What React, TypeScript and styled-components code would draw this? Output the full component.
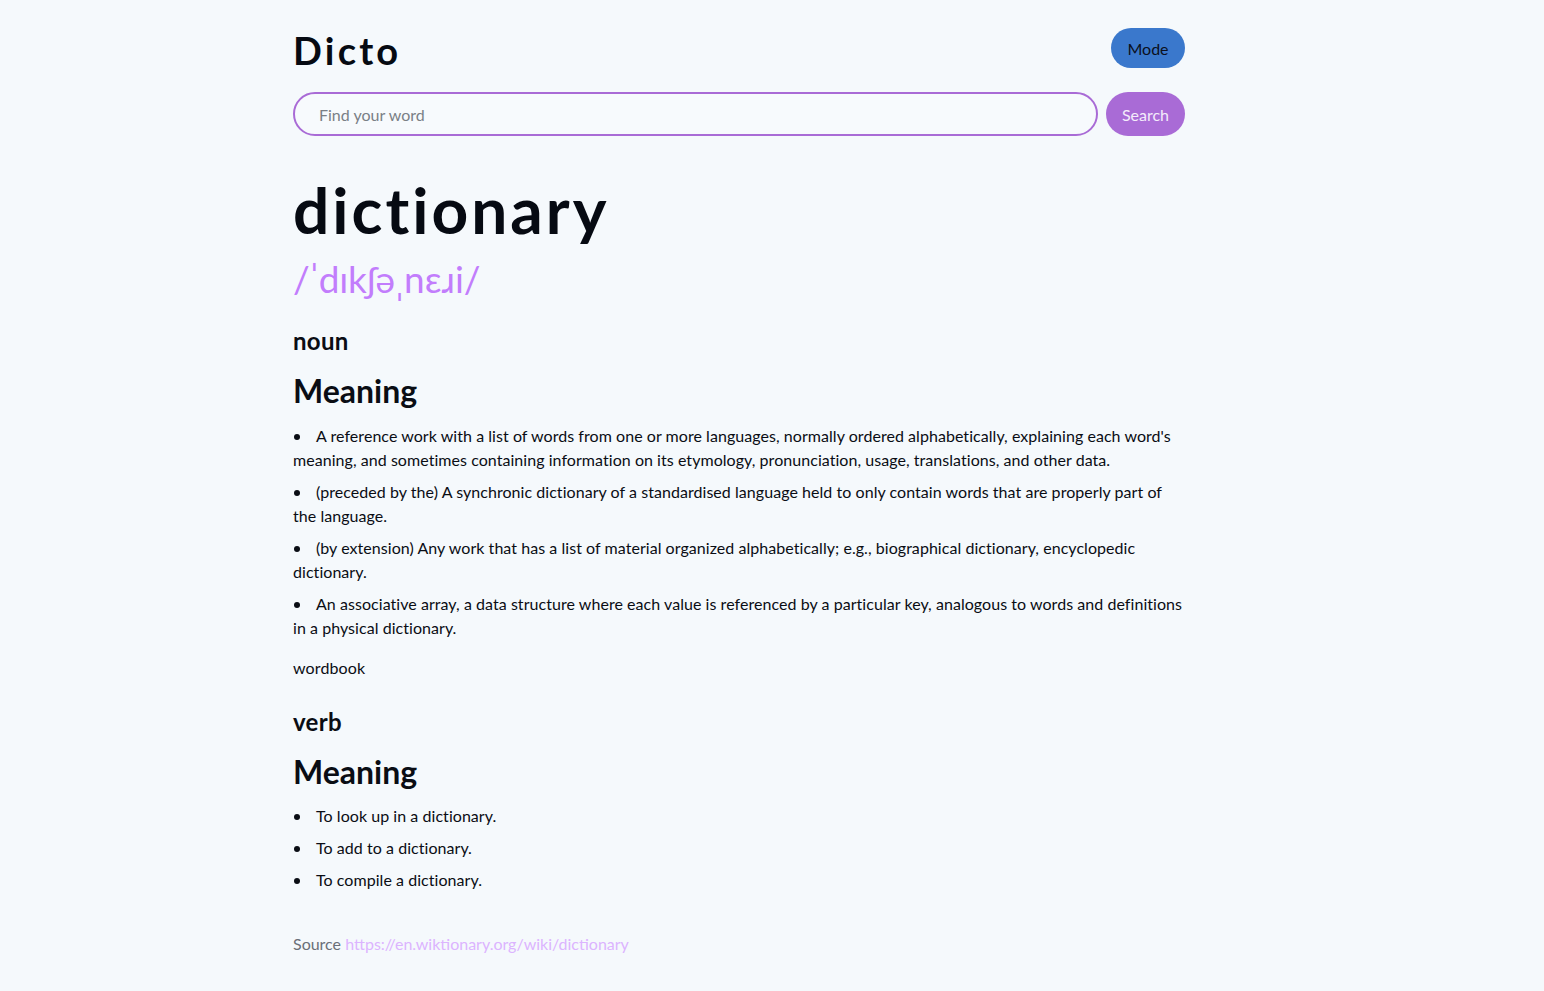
import React from "react";
import styled, { createGlobalStyle } from "styled-components";

const Global = createGlobalStyle`
  html, body { margin: 0; padding: 0; background: #f5f9fc; }
  body { font-family: Lato, "Noto Sans", sans-serif; color: #0a0d14; }
  * { box-sizing: border-box; }
`;

const Page = styled.main`
  width: 892px;
  margin-left: calc(50% - 479px);
  padding-top: 28px;
  padding-bottom: 30px;
`;

const Header = styled.header`
  display: flex;
  justify-content: space-between;
  align-items: flex-start;
`;

const Logo = styled.h1`
  margin: 0;
  font-size: 38px;
  line-height: 44px;
  font-weight: 700;
  letter-spacing: 3.2px;
  color: #060a12;
`;

const PillButton = styled.button<{ $bg: string; $fg: string; $w: number; $h: number }>`
  width: ${(p) => p.$w}px;
  height: ${(p) => p.$h}px;
  border: none;
  border-radius: 999px;
  background: ${(p) => p.$bg};
  color: ${(p) => p.$fg};
  font-family: inherit;
  font-size: 16px;
  padding: 0;
  cursor: pointer;
`;

const SearchRow = styled.form`
  display: flex;
  gap: 8px;
  margin-top: 20px;
`;

const SearchInput = styled.input`
  flex: 1;
  height: 44px;
  border: 2px solid #a96bd6;
  border-radius: 22px;
  background: #f7fafd;
  padding: 0 24px;
  font-family: inherit;
  font-size: 16px;
  color: #222;
  outline: none;
  &::placeholder { color: #7a7f86; }
`;

const Word = styled.h2`
  margin: 36px 0 0;
  font-size: 64px;
  line-height: 76px;
  font-weight: 700;
  letter-spacing: 3px;
  color: #060a12;
`;

const Phonetic = styled.p`
  margin: 7px 0 0;
  font-size: 37px;
  line-height: 48px;
  color: #c27dfc;
`;

const PartOfSpeech = styled.h3<{ $top?: number }>`
  margin: ${(p) => p.$top ?? 22}px 0 0;
  font-size: 24px;
  line-height: 32px;
  font-weight: 700;
  letter-spacing: 0.3px;
`;

const MeaningTitle = styled.h4`
  margin: 14px 0 0;
  font-size: 32px;
  line-height: 40px;
  font-weight: 700;
`;

const List = styled.ul<{ $top?: number }>`
  margin: ${(p) => p.$top ?? 13}px 0 0;
  padding: 0;
  list-style: none;
`;

const Item = styled.li`
  position: relative;
  font-size: 16px;
  line-height: 24px;
  letter-spacing: 0.05px;
  margin-bottom: 8px;
  &::before {
    content: "";
    position: absolute;
    left: 1px;
    top: 10px;
    width: 6px;
    height: 6px;
    border-radius: 50%;
    background: #0a0d14;
  }
`;

const Marker = styled.span`
  display: inline-block;
  width: 23px;
`;

const Synonym = styled.p`
  margin: 16px 0 0;
  font-size: 16px;
  line-height: 24px;
  letter-spacing: 0.12px;
`;

const Source = styled.p`
  margin: 40px 0 0;
  font-size: 16px;
  line-height: 24px;
  color: #6a6f78;
`;

const Link = styled.a`
  color: #dcb4ff;
  text-decoration: none;
`;

const noun = [
  "A reference work with a list of words from one or more languages, normally ordered alphabetically, explaining each word's meaning, and sometimes containing information on its etymology, pronunciation, usage, translations, and other data.",
  "(preceded by the) A synchronic dictionary of a standardised language held to only contain words that are properly part of the language.",
  "(by extension) Any work that has a list of material organized alphabetically; e.g., biographical dictionary, encyclopedic dictionary.",
  "An associative array, a data structure where each value is referenced by a particular key, analogous to words and definitions in a physical dictionary.",
];

const verb = ["To look up in a dictionary.", "To add to a dictionary.", "To compile a dictionary."];

export default function App() {
  return (
    <>
      <Global />
      <Page>
        <Header>
          <Logo>Dicto</Logo>
          <PillButton $bg="#3a78cc" $fg="#0b1020" $w={74} $h={40}>Mode</PillButton>
        </Header>
        <SearchRow onSubmit={(e) => e.preventDefault()}>
          <SearchInput placeholder="Find your word" />
          <PillButton $bg="#a96bd6" $fg="#f4ecfb" $w={79} $h={44} type="submit">Search</PillButton>
        </SearchRow>
        <Word>dictionary</Word>
        <Phonetic>/ˈdɪkʃəˌnɛɹi/</Phonetic>
        <PartOfSpeech>noun</PartOfSpeech>
        <MeaningTitle>Meaning</MeaningTitle>
        <List>
          {noun.map((t) => (
            <Item key={t}>
              <Marker />
              {t}
            </Item>
          ))}
        </List>
        <Synonym>wordbook</Synonym>
        <PartOfSpeech $top={26}>verb</PartOfSpeech>
        <MeaningTitle>Meaning</MeaningTitle>
        <List $top={12}>
          {verb.map((t) => (
            <Item key={t}>
              <Marker />
              {t}
            </Item>
          ))}
        </List>
        <Source>
          Source <Link href="#">https://en.wiktionary.org/wiki/dictionary</Link>
        </Source>
      </Page>
    </>
  );
}
